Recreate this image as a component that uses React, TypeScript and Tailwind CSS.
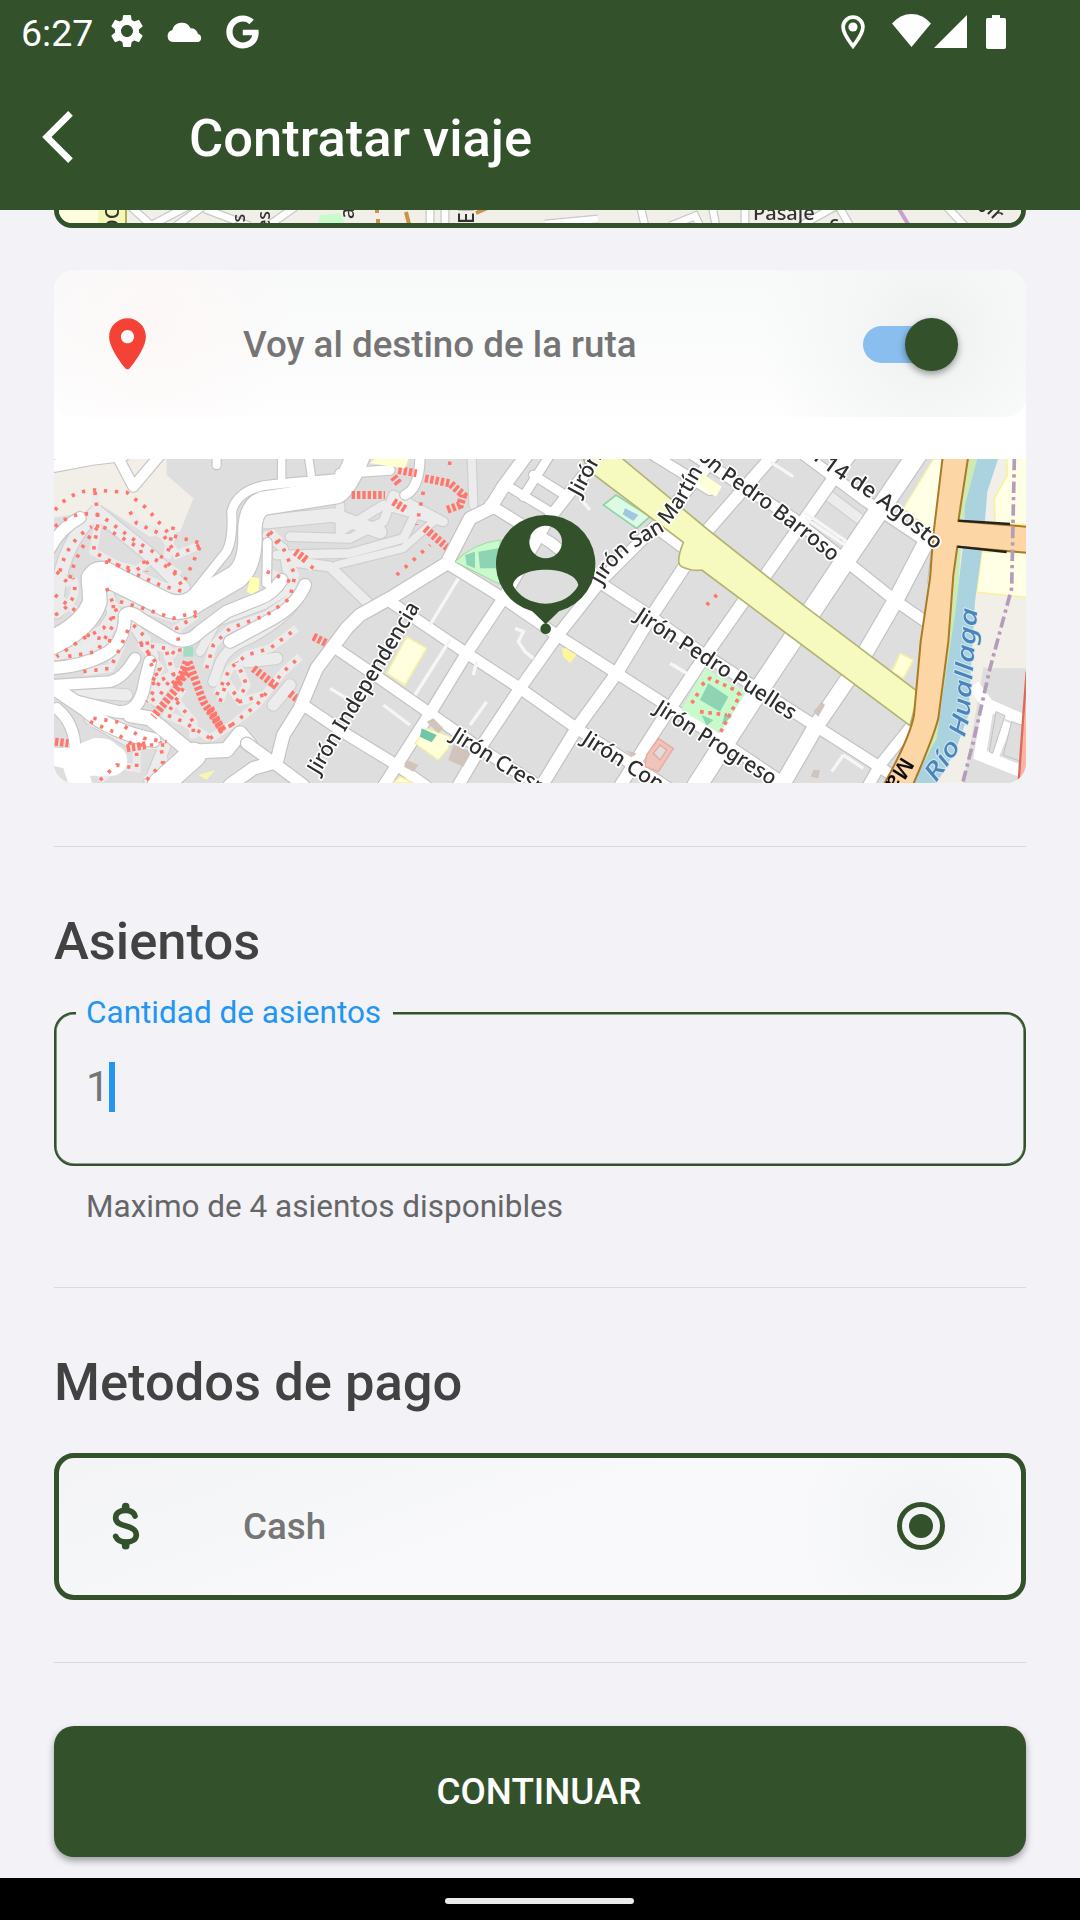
import React from "react";
import { MdSettings } from "react-icons/md";
import { FaGoogle } from "react-icons/fa";

type Road = [string, number];

const streets: Road[] = [
  ["M1320 150L1505 265L1660 390L1790 475L1950 590L2230 770L2480 930L2570 990", 32],
  ["M1190 325L1360 430L1520 540L1700 655L1950 815L2210 990", 32],
  ["M1020 440L1250 595L1410 700L1580 820L1850 995", 32],
  ["M850 575L960 650L1140 775L1290 880L1470 995", 32],
  ["M760 750L890 838L1040 930L1130 995", 32],
  ["M590 865L680 930L760 990", 34],
  ["M1430 0L1360 95L1320 160L1260 190L1190 325L1020 430L930 480L890 520L800 640L750 760L700 840L680 920L610 940L540 990", 38],
  ["M1650 0L1490 200L1360 430L1250 595L1140 775L1000 994", 34],
  ["M1500 0L1420 125", 26],
  ["M1360 85L1500 170", 26],
  ["M1450 60L1545 120", 26],
  ["M2010 -10L1820 210L1650 380L1520 545L1410 700L1290 880L1220 1000", 34],
  ["M2170 0L1960 240L1900 340L1800 490L1700 655L1580 820L1470 1000", 36],
  ["M2400 0L2140 370L2080 440L1940 640L1820 820L1710 994", 36],
  ["M2600 0L2390 310L2250 520L2100 745L1940 994", 58],
  ["M2670 180L2540 430L2430 620L2300 810L2190 1000", 46],
  ["M2610 780L2490 930L2450 1000", 32],
  ["M1930 0L2010 50L2230 190L2390 320L2540 440L2670 530", 32],
  ["M1810 0L1980 105", 30],
  ["M2250 -10L2450 140L2690 300", 32],
  ["M1830 225L1930 300", 34],
  ["M2670 250L2655 380", 40],
];

const hillRoads: Road[] = [
  ["M0 565Q110 515 135 440L130 370Q150 340 190 370L330 440Q390 475 440 435L560 365Q600 330 600 250Q595 160 640 145L860 110Q890 90 925 0", 70],
  ["M430 415L530 290Q550 250 545 170Q560 110 640 92L700 85L870 70", 26],
  ["M0 35L120 12L220 0", 36],
  ["M200 0L250 95L330 0", 30],
  ["M0 280Q30 220 90 188", 34],
  ["M0 640Q100 635 170 595Q225 560 225 480Q240 465 270 490L370 550Q410 570 450 530L530 470L630 430Q670 415 695 375", 36],
  ["M540 560L670 490Q740 450 765 390", 36],
  ["M652 262L650 385", 26],
  ["M20 690L180 680Q220 670 255 610", 32],
  ["M300 620L285 680Q270 780 200 770L60 735", 36],
  ["M0 690L110 765Q180 830 310 855", 42],
  ["M20 760Q80 810 75 900", 32],
  ["M240 780L300 790L420 890L530 885L570 835L600 870", 42],
  ["M430 900L330 990", 74],
  ["M500 10L500 30", 24],
  ["M695 0L695 75M775 0L785 70", 22],
  ["M870 55L1020 45M1065 120Q1110 100 1110 0", 28],
];

const lanes: Road[] = [
  ["M650 200L850 180L990 230", 40],
  ["M720 245L900 250L1000 200L1030 120L1180 200", 26],
  ["M680 300L900 295L1060 250L1100 170", 26],
  ["M730 320L840 335L960 450", 30],
  ["M860 330L1060 280L1150 200", 22],
  ["M760 400Q730 480 600 550Q520 580 505 640L490 680", 30],
  ["M450 590L500 500L640 450L720 400L700 280L650 240", 26],
  ["M590 620L680 610M670 750L720 690", 34],
  ["M1265 0L1270 150", 24],
  ["M870 150L870 230L1000 150L1180 200", 26],
  ["M60 710L230 720", 34],
  ["M20 470Q20 280 140 170L300 300L400 400", 40],
  ["M170 400L190 480L130 570L20 600", 34],
  ["M250 510L310 600L320 740", 30],
  ["M120 790L240 860L350 860L300 980", 34],
  ["M2320 110L2440 200", 30],
];

const redPaths = [
  "M15 165Q60 110 130 105L230 112L290 160L360 240L455 265L405 375",
  "M15 215Q70 165 150 180L260 260L350 315L400 400",
  "M30 350Q50 260 125 215M60 370Q80 280 150 210L270 280L290 350",
  "M15 480Q90 440 70 370M15 420L80 470M20 350L60 390",
  "M135 110L145 200L130 290L230 345L330 390L400 410",
  "M165 320L260 345L310 310L390 360",
  "M240 170L260 205L340 240L380 300L450 270M370 215L350 310",
  "M170 400L200 470L160 520L100 550L20 605",
  "M210 440L280 460L370 490L440 470",
  "M100 650L180 640L210 580L240 510",
  "M190 450L190 510L140 590L50 605M110 540L190 560",
  "M250 510L290 550L300 620L330 680L290 740M270 570L350 580L380 600",
  "M350 590L370 660L330 720L300 740M390 590L380 520L440 480",
  "M380 740L430 800L430 850M400 700L350 780L400 800L480 850",
  "M470 640L490 570L540 520L650 480L720 430L735 360L700 280L650 235",
  "M500 720L540 640L590 600L660 580L740 520",
  "M560 740L590 690L560 620M640 720L570 740L530 680L510 740",
  "M545 810L620 750L700 650L750 605M480 850L560 800",
  "M120 800L190 830L250 870L350 870M130 790L200 800L280 850L350 860",
  "M150 975L200 930L260 940L260 880M290 975L340 920L330 860",
  "M270 560L330 640L300 690L410 640M650 350L700 370L740 390",
  "M660 230L690 260M790 340L740 300",
  "M1040 360L1140 270M1200 20L1195 50M1120 110L1100 210",
  "M1965 590L1985 540L2010 550M1970 450L2010 410",
  "M2370 250L2390 270",
];

const redSteps = [
  "M410 620L380 700L310 785",
  "M415 620L460 740L520 830",
  "M610 640L680 695M720 715L745 735M790 545L840 570",
  "M905 120L1005 120",
  "M1045 45L1100 55M1030 65L1050 90",
  "M1125 70L1200 85L1240 120L1230 150L1190 165",
  "M1030 140L1070 165M1125 220L1195 280",
  "M735 290L770 315M15 860L55 865M230 880L290 870",
  "M480 760L520 830M370 690L420 650",
];

const labels: [string, string, number][] = [
  ["M806 962L1114 450", "Jirón Independencia", 590],
  ["M1590 128L1696 -68", "Jirón", 140],
  ["M1655 392Q1690 327 1750 282L1832 235Q1892 170 1924 110L1981 10", "Jirón San Martín", 468],
  ["M1895 -30L2025 80Q2180 182 2375 345", "Jirón Pedro Barroso", 573],
  ["M2190 -75Q2290 20 2350 60L2425 108Q2550 190 2692 318", "Jirón 14 de Agosto", 590],
  ["M1752 492L2240 808", "Jirón Pedro Puelles", 560],
  ["M1810 770L2190 1010", "Jirón Progreso", 418],
  ["M1592 862L1940 1084", "Jirón Con", 276],
  ["M1200 852L1500 1039", "Jirón Cresp", 322],
];

function Roads({ items, casing, fill }: { items: Road[]; casing: string; fill: string }) {
  return (
    <g fill="none" strokeLinecap="round" strokeLinejoin="round">
      {items.map(([d, w]) => (
        <path key={"c" + d} d={d} stroke={casing} strokeWidth={w + 7} />
      ))}
      {items.map(([d, w]) => (
        <path key={"f" + d} d={d} stroke={fill} strokeWidth={w} />
      ))}
    </g>
  );
}

function StreetMap() {
  return (
    <svg viewBox="12 12 2916 972" className="block h-[324px] w-[972px] rounded-b-[20px]">
      <defs>
        <filter id="tile" x="0" y="0" width="2940" height="1000" filterUnits="userSpaceOnUse">
          <feGaussianBlur stdDeviation="2.3" />
        </filter>
      </defs>
      <rect x="0" y="0" width="2940" height="1000" fill="#dedede" />
      <g filter="url(#tile)">
        <rect x="-20" y="-20" width="2980" height="1040" fill="#dedede" />
        <path d="M0 0H350V60L430 130L390 230L300 245L170 160L0 190Z" fill="#f2efe9" />
        <path d="M2740 0H2940V640L2800 640L2740 990H2600Z" fill="#f2efe9" />
        <path d="M2870 0H2940V210L2835 205L2833 130L2872 60ZM2795 290H2940V428L2780 412Z" fill="#ffffe5" stroke="#f7f2a0" strokeWidth="5" />
        <path d="M2800 637L2940 660V1000H2740L2780 800Z" fill="#dedede" />
        <Roads items={lanes} casing="#cfcfcf" fill="#ececec" />
        <g fill="none" stroke="#ebebeb" strokeWidth="24">
          {redPaths.slice(3, 22).map((d) => (
            <path key={d} d={d} />
          ))}
        </g>
        <Roads items={hillRoads} casing="#c6c6c6" fill="#ffffff" />
        <path d="M0 880L60 878L130 850Q180 845 200 870Q240 890 230 930Q210 970 170 962L120 962L130 1000H60L40 940L0 930Z" fill="#fff" />
        <g fill="none" stroke="#ff776c" strokeWidth="11">
          {redPaths.map((d) => (
            <path key={d} d={d} strokeDasharray="10 23" />
          ))}
          {redSteps.map((d) => (
            <path key={d} d={d} strokeWidth="24" strokeDasharray="10 6" />
          ))}
        </g>
        <path d="M590 410L602 365L628 370L626 405L605 418Z" fill="#ffffb0" />
        <path d="M400 575H430V605H400Z" fill="#a3dcc5" />
        <path d="M445 960L495 945L470 975Z" fill="#f7f7b0" />
        <path d="M960 25L985 0H1080L1065 40Z" fill="#ffffd0" />
        <Roads items={streets} casing="#c2c2c2" fill="#ffffff" />
        <path d="M1070 545L1130 580L1065 690L1010 655Z" fill="#ffffe0" stroke="#f4f0a8" strokeWidth="5" />
        <path d="M1215 320Q1270 265 1350 255V388Z" fill="#c8facc" stroke="#a5d6a5" strokeWidth="3" />
        <path d="M1245 300L1275 290V340L1250 330ZM1285 290L1345 280V340H1290Z" fill="#8ed4b4" />
        <path d="M1660 150L1698 120L1800 185L1760 220Z" fill="#dcfae4" stroke="#8fd4a5" strokeWidth="5" />
        <path d="M1725 160L1765 180L1750 198L1718 178Z" fill="#9cc9dd" />
        <path d="M1535 580H1550L1565 592L1580 600L1560 625L1540 605Z" fill="#fff59a" />
        <path d="M1130 820L1200 845L1195 880L1165 915L1095 865Z" fill="#ffffd8" stroke="#f4f0a8" strokeWidth="4" />
        <path d="M1115 820L1160 840L1145 862L1110 845Z" fill="#6fc7a8" />
        <path d="M1130 800L1150 790L1180 820L1165 835ZM1210 870L1265 890L1240 935L1195 915ZM1070 915L1105 930L1090 950L1062 935ZM1725 885L1760 895L1750 905ZM2290 770L2315 740L2325 750L2305 785ZM2290 945L2310 945L2305 970L2282 965Z" fill="#d0c4bc" />
        <path d="M1790 900L1825 850L1870 880L1825 950L1785 935Z" fill="#efc4bc" stroke="#eba79c" strokeWidth="4" />
        <path d="M1810 895L1830 870L1850 885L1830 915Z" fill="#dedede" stroke="#eba79c" strokeWidth="4" />
        <path d="M1050 965L1090 984H1030ZM2525 650L2550 595L2590 615L2560 670Z" fill="#ffffd8" stroke="#f4f0a8" strokeWidth="5" />
        <path d="M1965 640L2090 710L2010 835L1893 765Z" fill="#c8facc" />
        <path d="M1975 685L2035 725L2010 770L1950 735ZM1955 780L1990 795L1970 812ZM2025 775L2045 785L2015 810Z" fill="#8ed4b4" />
        <path d="M1955 690L1980 670L2055 705L2070 720L2010 835M1950 770L2030 780M1925 745L1950 705" fill="none" stroke="#ff7a70" strokeWidth="11" strokeDasharray="11 14" />
        <path d="M1395 520L1420 530L1405 560L1425 590L1450 610M1225 370L1140 510M1200 555L1095 720M1310 740L1260 810M1000 750L1080 810M1280 620L1270 660M1860 625L1910 655L1870 630M2160 20L2230 65M2260 170L2390 260M2265 190L2385 270M2380 900L2345 950M2380 900L2440 940M1590 130L1620 165M840 700L890 730" fill="none" stroke="#f6f6f6" strokeWidth="10" />
        <path d="M1950 50L2015 95L1998 125L1950 95Z" fill="#ffffd8" />
        <path d="M2650 12H2680L2655 235L2560 160Z" fill="#ffffe5" stroke="#f4f0a8" strokeWidth="4" />
        <path d="M1600 12L1620 50L1900 262Q1875 325 1895 335Q1930 350 1955 345L2580 812L2606 712L2262 452L1975 225L1710 5Z" fill="#f7fabf" stroke="#b4b474" strokeWidth="5" />
        <path d="M2752 0H2785L2740 195L2715 520L2690 740L2655 870L2600 1000L2640 700L2710 250Z" fill="#cdebb0" />
        <path d="M2785 0H2848L2812 110L2805 195L2795 290L2775 440L2755 780L2715 890L2650 1000H2580L2660 850L2690 640L2715 480L2738 280L2745 150Z" fill="#aad3df" />
        <path d="M2680 -10L2650 240L2640 370L2612 560L2592 780Q2580 850 2490 1010H2580Q2650 850 2665 790L2695 560L2710 360L2722 275L2938 294V216L2725 198L2757 -10Z" fill="#fcd6a4" stroke="#aa7a28" strokeWidth="6" />
        <path d="M2725 197L2880 207M2722 275L2870 291" stroke="#222" strokeWidth="7" />
        <path d="M2770 690L2815 750L2930 800M2815 745L2790 900L2930 955M2870 800L2830 900" fill="none" stroke="#fff" strokeWidth="36" />
        <path d="M2838 770L2865 782L2828 895L2818 890ZM2885 800L2928 815V925L2860 900Z" fill="#dedede" stroke="#c2c2c2" strokeWidth="3" />
        <path d="M2930 650L2920 780L2905 994H2950Z" fill="#fab4a2" stroke="#da6b5d" strokeWidth="7" />
        <path d="M2893 12L2885 400L2820 640L2770 860L2738 984" fill="none" stroke="#b59cba" strokeWidth="11" strokeDasharray="34 12 10 12" />
        <g fontFamily='"Noto Sans", "Open Sans", sans-serif' fontSize="64" fontWeight="500" fill="#2e2e2e" stroke="#fff" strokeWidth="10" strokeLinejoin="round" style={{ paintOrder: "stroke" }}>
          {labels.map(([d, text, len], i) => (
            <g key={text + i}>
              <path id={"street" + i} d={d} fill="none" stroke="none" />
              <text>
                <textPath href={"#street" + i} textLength={len} lengthAdjust="spacingAndGlyphs">
                  {text}
                </textPath>
              </text>
            </g>
          ))}
          <path id="river" d="M2658 984L2712 905Q2750 850 2758 780L2784 440" fill="none" stroke="none" />
          <text fill="#4a84bb" fontStyle="italic" fontSize="72" stroke="#d5e9f0" strokeWidth="5">
            <textPath href="#river" textLength="550" lengthAdjust="spacingAndGlyphs">Río Huallaga</textPath>
          </text>
          <text transform="translate(2556 902) rotate(122)" fill="#111" stroke="none" fontSize="66" fontWeight="600">Ma</text>
        </g>
      </g>
      <path
        fillRule="evenodd"
        fill="#33522c"
        d="M1487 180A147 147 0 0 1 1527 469L1487 508L1447 469A147 147 0 0 1 1487 180ZM1487 212A49 49 0 1 0 1487 310A49 49 0 1 0 1487 212ZM1389 391C1392 361 1440 344 1487 344C1534 344 1582 361 1585 391C1570 421 1534 446 1487 446C1440 446 1404 421 1389 391Z"
      />
      <circle cx="1487" cy="521" r="16" fill="#33522c" />
    </svg>
  );
}

const edgeRoads =
  "M129 205L152 226M150 226L190 205M176 226L205 205M205 209L250 226M268 226L295 207M430 205V226M445 205V226M545 224L598 219M640 205L645 226M670 226L695 216L700 226M712 205L716 226M745 205V226M800 226L838 205L850 226M945 205L965 226";

function PreviousMapEdge() {
  return (
    <svg viewBox="59 210 962 13" className="block h-[13px] w-full">
      <defs>
        <filter id="edge" x="40" y="200" width="1000" height="40" filterUnits="userSpaceOnUse">
          <feGaussianBlur stdDeviation="0.7" />
        </filter>
      </defs>
      <g filter="url(#edge)">
        <rect x="50" y="200" width="980" height="33" fill="#f2efe9" />
        <path d="M50 200H101V233H50Z" fill="#ffffe0" />
        <path d="M99 200H126V233H97Z" fill="#f4f6b8" />
        <path d="M126 200V233" stroke="#aeb04e" strokeWidth="2" />
        <path d={edgeRoads} fill="none" stroke="#c8c8c8" strokeWidth="9" />
        <path d={edgeRoads} fill="none" stroke="#fff" strokeWidth="6.500" />
        <path d="M320 215L340 213L345 224H318Z" fill="#c8facc" />
        <path d="M377 208V213M378 219V224M406 212L409 224M476 213L490 207" stroke="#c89444" strokeWidth="4" />
        <path d="M899 209L908 224" stroke="#c9a0cc" strokeWidth="4" />
        <g fontFamily='"Noto Sans", sans-serif' fontSize="20" fontWeight="500" fill="#333">
          <text x="753" y="220">Pasaje</text>
          <text x="829" y="230">c</text>
          <text transform="translate(119 235) rotate(-90)">OC</text>
          <text transform="translate(245 230) rotate(-90)" fontSize="18">rs</text>
          <text transform="translate(270 230) rotate(-90)" fontSize="18">es</text>
          <text transform="translate(354 219) rotate(-90)">a</text>
          <text transform="translate(474 224) rotate(-90)" fontSize="21">EL</text>
          <text transform="translate(982 208) rotate(45)">Jir</text>
        </g>
      </g>
    </svg>
  );
}

function StatusBar() {
  return (
    <div className="flex h-[63px] items-center pl-[21px] text-white">
      <span className="w-[86px] pt-[2px] text-[37.500px] leading-[44px] font-normal">6:27</span>
      <MdSettings className="-mt-px h-[40px] w-[40px]" />
      <svg viewBox="0 0 36 20" className="ml-[20px] h-[20px] w-[36px]" fill="currentColor">
        <path d="M6 20A6 6 0 0 1 5.200 8.200A9.800 9.800 0 0 1 23.500 6.200A7 7 0 0 1 31 12A4.200 4.200 0 0 1 31.500 20Z" />
      </svg>
      <FaGoogle className="ml-[23px] h-[34px] w-[33px]" />
      <svg viewBox="0 0 24 34" className="ml-[582px] h-[34px] w-[24px]" fill="currentColor">
        <path d="M12 2.200A9.900 9.900 0 0 1 21.900 12.100C21.900 19 16 26 12 31.200C8 26 2.100 19 2.100 12.100A9.900 9.900 0 0 1 12 2.200Z" fill="none" stroke="currentColor" strokeWidth="3.700" />
        <circle cx="12" cy="12" r="4.600" />
      </svg>
      <svg viewBox="0 0 39 33" className="ml-[27px] h-[33px] w-[39px] -translate-y-px" fill="currentColor">
        <path d="M0 9.500Q8 0 19.500 0T39 9.500L19.500 33Z" />
      </svg>
      <svg viewBox="0 0 33 33" className="ml-[3px] h-[33px] w-[33px]" fill="currentColor">
        <path d="M33 0V33H0Z" />
      </svg>
      <svg viewBox="0 0 20 34" className="ml-[19px] h-[34px] w-[20px]" fill="currentColor">
        <path d="M6 0H14V3H18.500Q20 3 20 5V32Q20 34 18 34H2Q0 34 0 32V5Q0 3 1.500 3H6Z" />
      </svg>
    </div>
  );
}

export default function App() {
  return (
    <div className="flex h-[1920px] w-[1080px] flex-col overflow-hidden bg-[#f3f2f7] font-['Roboto',sans-serif]">
      <header className="h-[210px] shrink-0 bg-[#33522c]">
        <StatusBar />
        <div className="flex h-[147px] items-center pl-[42px] text-white">
          <svg viewBox="0 2.1 11.67 19.8" className="h-[52px] w-[31px]" fill="currentColor">
            <path d="M11.670 3.870L9.900 2.100 0 12l9.900 9.900 1.770-1.770L3.540 12z" />
          </svg>
          <h1 className="ml-[116px] pt-[3px] text-[52.500px] leading-[62px] font-medium">Contratar viaje</h1>
        </div>
      </header>

      <main className="flex flex-1 flex-col px-[54px]">
        <div className="h-[18px] shrink-0 overflow-hidden rounded-b-[20px] border-x-[5px] border-b-[5px] border-[#33522c]">
          <PreviousMapEdge />
        </div>

        <section className="mt-[42px] h-[513px] shrink-0 rounded-[20px] bg-white">
          <div className="flex h-[147px] items-center rounded-[20px] bg-[radial-gradient(circle_at_875px_65px,#eef1f1_0px,#f5f6f6_75px,transparent_170px),radial-gradient(circle_at_100px_50px,#fdf8f7_0px,transparent_140px),linear-gradient(#f8f9f9,#fefefe)] pt-px pl-[42px]">
            <svg viewBox="0 0 24 24" className="h-[63px] w-[63px]" fill="#f44336">
              <path d="M12 2C8.130 2 5 5.130 5 9c0 4.170 4.420 9.920 6.240 12.110.4.480 1.130.480 1.530 0C14.580 18.920 19 13.170 19 9c0-3.870-3.130-7-7-7zm0 9.500c-1.380 0-2.500-1.120-2.500-2.500s1.120-2.500 2.500-2.500 2.500 1.120 2.500 2.500-1.120 2.500-2.500 2.500z" />
            </svg>
            <span className="ml-[84px] w-[620px] pt-px text-[36.750px] leading-[44px] font-medium text-[#757575]">
              Voy al destino de la ruta
            </span>
            <div className="flex h-[37px] w-[88px] items-center rounded-full bg-[#89beee]">
              <div className="ml-[42px] size-[53px] shrink-0 rounded-full bg-[#33522c] shadow-[0_3px_7px_rgba(0,0,0,0.4)]" />
            </div>
          </div>
          <div className="pt-[42px]">
            <StreetMap />
          </div>
        </section>

        <div className="mt-[63px] h-px shrink-0 bg-[#dbdadf]" />

        <h2 className="mt-[63px] h-[62px] shrink-0 text-[52.500px] leading-[62px] font-medium text-[#424242]">Asientos</h2>

        <div className="relative mt-[40px] h-[154px] shrink-0 rounded-[20px] border-2 border-[#33522c] pt-[45px] pl-[31px] shadow-[inset_0_0_0_0.6px_#33522c]">
          <span className="absolute -top-[20px] left-[20px] bg-[#f3f2f7] pr-[12px] pl-[10px] text-[31.500px] leading-[37px] text-[#2196f3]">
            Cantidad de asientos
          </span>
          <div className="-ml-px flex h-[56px] items-center text-[42px] leading-[50px] text-[#757575]">
            <span>1</span>
            <span className="-ml-px h-[50px] w-[6px] bg-[#2196f3]" />
          </div>
        </div>
        <p className="mt-[22px] h-[37px] shrink-0 pl-[32px] text-[31.500px] leading-[37px] text-[#666668]">
          Maximo de 4 asientos disponibles
        </p>

        <div className="mt-[62px] h-px shrink-0 bg-[#dbdadf]" />

        <h2 className="mt-[63px] h-[62px] shrink-0 text-[52.500px] leading-[62px] font-medium text-[#424242]">Metodos de pago</h2>

        <div className="mt-[40px] flex h-[147px] shrink-0 items-center rounded-[20px] border-[5px] border-[#33522c] bg-[radial-gradient(circle_at_862px_68px,#f2f3f5_0px,#f6f7f9_70px,transparent_130px),linear-gradient(160deg,#f4f4f6_0%,#f5f6f8_25%,#f9f9fc_48%)] pb-px pl-[54px]">
          <svg viewBox="217 217 84 144" className="-ml-px h-[48px] w-[28px]" fill="none" stroke="#33522c" strokeLinecap="round">
            <path strokeWidth="17" d="M286 259C282 246 272 242 259 242C240 242 228 250 228 264C228 280 243 285 259 289C279 294 290 301 290 315C290 330 276 337 259 337C245 337 233 332 228 320" />
            <path strokeWidth="23" d="M258 231V238M258 341V348" />
          </svg>
          <span className="ml-[103px] w-[654px] pt-px text-[36.750px] leading-[44px] font-medium text-[#757575]">Cash</span>
          <div className="flex size-[48px] items-center justify-center rounded-full border-[5px] border-[#33522c]">
            <div className="size-[24px] rounded-full bg-[#33522c]" />
          </div>
        </div>

        <div className="mt-[62px] h-px shrink-0 bg-[#dbdadf]" />

        <button className="mt-[63px] h-[131px] shrink-0 rounded-[20px] bg-[#33522c] pr-[2px] text-[36.750px] font-medium text-white shadow-[0_4px_7px_rgba(0,0,0,0.35)]">
          CONTINUAR
        </button>
      </main>

      <footer className="flex h-[42px] shrink-0 items-center justify-center bg-black pr-px">
        <div className="mt-[4px] h-[6px] w-[189px] rounded-full bg-[#ebebeb]" />
      </footer>
    </div>
  );
}
